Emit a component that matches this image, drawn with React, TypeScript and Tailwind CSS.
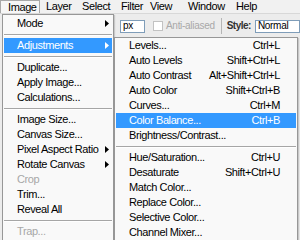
import React from "react";

type Item =
  | { sep: true }
  | { label: string; shortcut?: string; arrow?: boolean; disabled?: boolean; active?: boolean };

const imageMenu: Item[] = [
  { label: "Mode", arrow: true },
  { sep: true },
  { label: "Adjustments", arrow: true, active: true },
  { sep: true },
  { label: "Duplicate..." },
  { label: "Apply Image..." },
  { label: "Calculations..." },
  { sep: true },
  { label: "Image Size..." },
  { label: "Canvas Size..." },
  { label: "Pixel Aspect Ratio", arrow: true },
  { label: "Rotate Canvas", arrow: true },
  { label: "Crop", disabled: true },
  { label: "Trim..." },
  { label: "Reveal All" },
  { sep: true },
  { label: "Trap...", disabled: true },
];

const adjustMenu: Item[] = [
  { label: "Levels...", shortcut: "Ctrl+L" },
  { label: "Auto Levels", shortcut: "Shift+Ctrl+L" },
  { label: "Auto Contrast", shortcut: "Alt+Shift+Ctrl+L" },
  { label: "Auto Color", shortcut: "Shift+Ctrl+B" },
  { label: "Curves...", shortcut: "Ctrl+M" },
  { label: "Color Balance...", shortcut: "Ctrl+B", active: true },
  { label: "Brightness/Contrast..." },
  { sep: true },
  { label: "Hue/Saturation...", shortcut: "Ctrl+U" },
  { label: "Desaturate", shortcut: "Shift+Ctrl+U" },
  { label: "Match Color..." },
  { label: "Replace Color..." },
  { label: "Selective Color..." },
  { label: "Channel Mixer..." },
];

function Arrow({ white }: { white?: boolean }) {
  return (
    <svg width="4" height="7" viewBox="0 0 4 7" className="shrink-0">
      <path d="M0 0 L4 3.5 L0 7 Z" fill={white ? "#ffffff" : "#000000"} />
    </svg>
  );
}

function MenuRows({ items }: { items: Item[] }) {
  return (
    <>
      {items.map((it, i) => {
        if ("sep" in it) {
          return (
            <div key={i} className="h-[7px] flex flex-col justify-center">
              <div className="h-px bg-[#a6a6a6]" />
              <div className="h-px bg-white" />
            </div>
          );
        }
        const color = it.active ? "text-white" : it.disabled ? "text-[#a7a7a7]" : "text-black";
        return (
          <div
            key={i}
            className={`h-[15px] flex items-center pl-[13px] pr-[16px] ${it.active ? "bg-[#3399ff]" : ""} ${color}`}
          >
            <span className="flex-1 whitespace-nowrap">{it.label}</span>
            {it.shortcut && <span className="shrink-0 whitespace-nowrap">{it.shortcut}</span>}
            {it.arrow && (
              <span className="-mr-[13px] flex items-center">
                <Arrow white={it.active} />
              </span>
            )}
          </div>
        );
      })}
    </>
  );
}

export default function App() {
  const bar = [
    { t: "Layer", w: "w-[36px]" },
    { t: "Select", w: "w-[39px]" },
    { t: "Filter", w: "w-[29px]" },
    { t: "View", w: "w-[38px]" },
    { t: "Window", w: "w-[48px]" },
    { t: "Help", w: "w-[40px]" },
  ];
  return (
    <div
      className="relative w-[300px] h-[240px] overflow-hidden bg-[#ececec] text-[11px] tracking-[-0.4px] leading-none text-black"
      style={{ fontFamily: '"Liberation Sans", Arial, sans-serif' }}
    >
      {/* menubar */}
      <div className="h-[14px] flex items-stretch bg-[#f1f1f1] border-b border-[#d8d8d8]">
        <div className="w-[40px] pl-[7px] flex items-center bg-[#f6f6f6] border-l border-r border-t border-[#a9a9a9]">
          Image
        </div>
        {bar.map((b) => (
          <div key={b.t} className={`${b.w} pl-[6px] flex items-center whitespace-nowrap`}>
            {b.t}
          </div>
        ))}
      </div>

      {/* options toolbar (behind menus) */}
      <div className="h-[24px] flex items-center pl-[120px] bg-[#ececec] text-[10px] tracking-[-0.3px]">
        <div className="w-[25px] h-[13px] bg-white border border-[#7f9db9] flex items-center pl-[2px]">
          px
        </div>
        <div className="ml-[8px] w-[10px] h-[10px] bg-white border border-[#c2c2c2]" />
        <span className="ml-[3px] text-[#a8a8a8]">Anti-aliased</span>
        <div className="ml-[6px] w-px h-[16px] bg-[#b5b5b5]" />
        <span className="ml-[5px] font-bold text-[#333] tracking-[-0.5px]">Style:</span>
        <div className="ml-[4px] flex-1 h-[13px] bg-white border border-[#7f9db9] flex items-center pl-[2px]">
          Normal
        </div>
      </div>

      {/* Image menu */}
      <div className="absolute left-[2px] top-[14px] w-[112px] h-[240px] bg-[#f9f9f9] border border-[#979797] px-[1px] pt-[1px] shadow-[1px_1px_1px_rgba(0,0,0,0.15)]">
        <MenuRows items={imageMenu} />
      </div>

      {/* Adjustments submenu */}
      <div className="absolute left-[114px] top-[37px] w-[184px] h-[220px] bg-[#f9f9f9] border border-[#979797] px-[1px] pt-0 shadow-[1px_1px_1px_rgba(0,0,0,0.15)]">
        <MenuRows items={adjustMenu} />
      </div>
    </div>
  );
}
